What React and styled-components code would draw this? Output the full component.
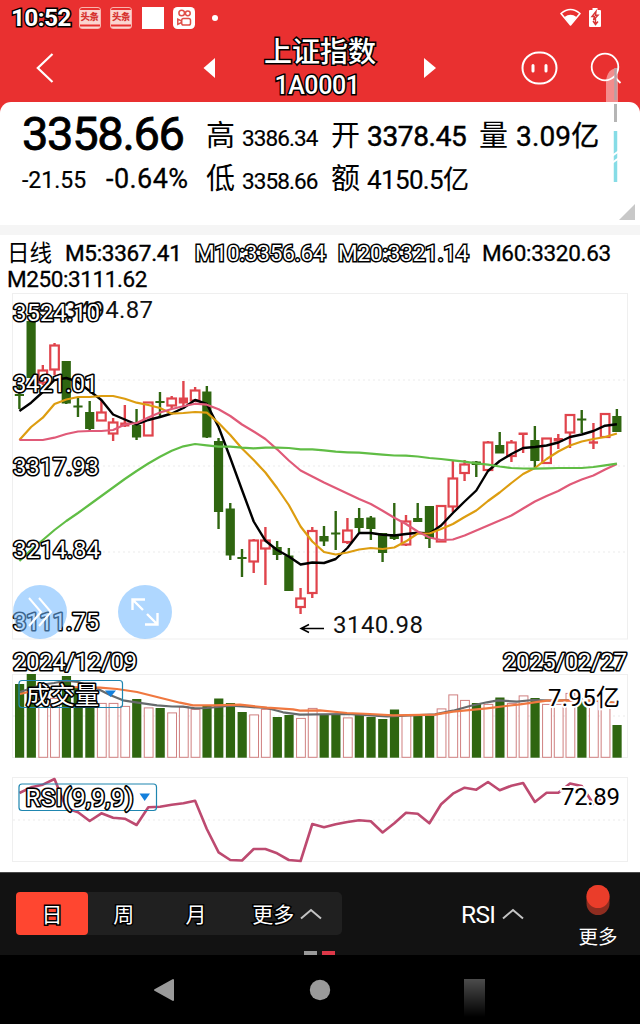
import React from "react";
import styled, { createGlobalStyle, css } from "styled-components";

const Global = createGlobalStyle`
  html, body { margin: 0; padding: 0; background: #fff; }
  * { box-sizing: border-box; }
  body { font-family: Roboto, "Noto Sans CJK SC", sans-serif; color: #000; }
  svg { display: block; }
`;

const outline = css`
  color: #fff;
  -webkit-text-stroke: ${(p) => p.$stroke || 3}px #000;
  paint-order: stroke fill;
`;

const Screen = styled.main`
  position: relative;
  width: 640px;
  height: 1024px;
  display: flex;
  flex-direction: column;
  overflow: hidden;
  background: #fff;
`;

/* ---------- header ---------- */
const Header = styled.header`
  height: 115px;
  flex: none;
  background: #e93030;
`;
const StatusBar = styled.div`
  height: 34px;
  padding: 1px 39px 0 11px;
  display: flex;
  align-items: center;
  justify-content: space-between;
`;
const StatusGroup = styled.div`
  display: flex;
  align-items: center;
  gap: ${(p) => p.$gap}px;
`;
const Clock = styled.span`
  ${outline}
  width: 58px;
  font-size: 24.5px;
  line-height: 34px;
  font-weight: 700;
  letter-spacing: -0.7px;
  white-space: nowrap;
`;
const NewsBadge = styled.span`
  width: 22px;
  height: 22px;
  border: 1px solid #f9b5ae;
  border-radius: 3px;
  background: linear-gradient(#e93030 0 2px, #fbd5d0 2px 16px, #e93030 17px 18px, #fbd5d0 19px);
  color: #d6332f;
  font-size: 9.5px;
  line-height: 18px;
  font-weight: 900;
  text-align: center;
  letter-spacing: -0.5px;
  white-space: nowrap;
`;
const WhiteSquare = styled.span`
  width: 22px;
  height: 22px;
  background: #fff;
`;
const Dot = styled.span`
  width: 6px;
  height: 6px;
  margin-left: 7px;
  border-radius: 50%;
  background: #fff;
`;
const NavBar = styled.div`
  height: 66px;
  padding: 0 18px 0 36px;
  display: grid;
  grid-template-columns: 167px 60px 114px 59px 1fr;
  align-items: center;
`;
const TitleBlock = styled.div`
  display: flex;
  flex-direction: column;
  align-items: center;
`;
const Title = styled.h1`
  ${outline}
  margin: 1px 0 0;
  font-size: 28px;
  line-height: 36px;
  font-weight: 500;
  white-space: nowrap;
`;
const Code = styled.span`
  ${outline}
  margin-left: -6px;
  font-size: 25px;
  line-height: 30px;
  font-weight: 500;
  letter-spacing: -0.4px;
`;
const NavIcons = styled.div`
  display: flex;
  justify-content: flex-end;
  align-items: center;
  gap: 31px;
`;
const Center = styled.div`
  display: flex;
  justify-content: ${(p) => p.$at || "center"};
`;

/* ---------- quote card ---------- */
const QuoteCard = styled.section`
  position: relative;
  height: 123px;
  margin-top: -13px;
  flex: none;
  padding: 7px 0 0 22px;
  display: flex;
  border-radius: 11px 11px 0 0;
  background: #fff;
`;
const PriceBlock = styled.div`
  width: 184px;
`;
const Details = styled.div`
  flex: 1;
  padding-top: 3px;
`;
const QuoteRow = styled.div`
  display: grid;
  grid-template-columns: ${(p) => p.$cols};
  align-items: baseline;
  height: ${(p) => p.$h}px;
  line-height: ${(p) => p.$h}px;
  white-space: nowrap;
`;
const Num = styled.span`
  font-size: ${(p) => p.$size}px;
  -webkit-text-stroke: ${(p) => p.$bold || 0}px #000;
  letter-spacing: ${(p) => p.$ls || 0}em;
`;
const Field = styled.span`
  font-family: "Noto Sans CJK SC", sans-serif;
  font-size: 29px;
`;
const Corner = styled.span`
  position: absolute;
  right: 5px;
  bottom: 5px;
  border-style: solid;
  border-width: 0 0 16px 16px;
  border-color: transparent transparent #c8c8c8 transparent;
`;
const Divider = styled.div`
  height: 10px;
  flex: none;
  background: #f5f5f5;
`;

/* ---------- averages ---------- */
const Averages = styled.section`
  height: 58px;
  flex: none;
  padding: 5px 0 0 7px;
`;
const AvgRow = styled.div`
  display: grid;
  grid-template-columns: 58px 130px 143px 144px 1fr;
  height: 26px;
  line-height: 26px;
  white-space: nowrap;
`;
const Avg = styled.span`
  font-size: 22.5px;
  letter-spacing: ${(p) => p.$ls || 0}px;
  -webkit-text-stroke: ${(p) => p.$bold || 0}px #000;
  ${(p) => p.$outlined && outline}
`;

/* ---------- charts ---------- */
const ChartArea = styled.section`
  position: relative;
  height: 579px;
  flex: none;
`;
const RoundButton = styled.button`
  position: absolute;
  left: ${(p) => p.$x}px;
  top: 292px;
  width: 54px;
  height: 54px;
  padding: 0;
  border: 0;
  border-radius: 50%;
  display: grid;
  place-items: center;
  background: rgba(110, 182, 255, 0.55);
`;

/* ---------- bottom ---------- */
const Toolbar = styled.footer`
  position: relative;
  height: 83px;
  flex: none;
  padding: 19px 16px 0;
  display: flex;
  background: #121212;
  border-top: 1px solid #4a4a4a;
  color: #fff;
`;
const Segments = styled.div`
  display: flex;
  width: 326px;
  height: 43px;
  border-radius: 5px;
  background: #202020;
`;
const Segment = styled.button`
  width: ${(p) => p.$w}px;
  padding: 0;
  border: 0;
  border-radius: 4px;
  display: flex;
  align-items: center;
  justify-content: center;
  gap: 6px;
  background: ${(p) => (p.$active ? "#ff4630" : "transparent")};
  color: #fff;
  font: 400 21px/43px "Noto Sans CJK SC", sans-serif;
`;
const Outlined = styled.span`
  ${outline}
`;
const Picker = styled.div`
  margin-left: 119px;
  height: 44px;
  display: flex;
  align-items: center;
  gap: 7px;
  font-size: 24.5px;
  letter-spacing: -0.7px;
`;
const MoreItem = styled.div`
  width: 44px;
  margin: -8px 4px 0 auto;
  display: flex;
  flex-direction: column;
  align-items: center;
  gap: 5px;
  font: 400 19.5px/28px "Noto Sans CJK SC", sans-serif;
  white-space: nowrap;
`;
const Pager = styled.div`
  position: absolute;
  left: 304px;
  bottom: 0;
  display: flex;
  gap: 5px;
`;
const Page = styled.span`
  width: 13px;
  height: 4px;
  background: ${(p) => p.$c};
`;
const SystemNav = styled.nav`
  height: 69px;
  flex: none;
  padding: 22px 155px 0 152px;
  display: flex;
  justify-content: space-between;
  background: #000;
`;
const Recents = styled.span`
  width: 21px;
  height: 38px;
  margin-top: 2px;
  background: linear-gradient(#4c4c4c, #000);
`;
const Trace = styled.svg`
  position: absolute;
  left: 600px;
  top: 60px;
`;

/* ---------- data ---------- */
// kind, body top, body bottom, wick top, wick bottom
const candles = [
  ["g", 394, 396, 386, 409], ["g", 321, 378, 310, 378], ["r", 370, 383, 365, 385], ["r", 345, 370, 343, 375],
  ["g", 361, 403.5, 361, 404], ["g", 405.5, 407.5, 398, 417], ["g", 412, 429, 401, 431], ["r", 412, 421, 400, 421],
  ["r", 422, 434, 418, 441], ["r", 422.5, 426.5, 405, 427], ["g", 425, 437.5, 409, 440], ["r", 402, 436, 402, 436],
  ["g", 401, 403, 392, 416], ["r", 398, 406, 396, 409], ["r", 397.5, 403.5, 381, 406], ["r", 390, 401, 387, 402],
  ["g", 391.5, 437.5, 386, 438], ["g", 441, 512, 438, 529], ["g", 508.5, 555.5, 503, 560], ["g", 557, 559, 549, 577],
  ["r", 540, 562, 539, 573], ["r", 540, 549, 527, 585], ["g", 547, 555, 541, 560], ["g", 555.5, 591, 548, 591],
  ["r", 598, 607.5, 588, 614], ["r", 530.5, 593.5, 527, 598], ["g", 536, 541.5, 526, 546], ["g", 532.5, 534.5, 511, 550],
  ["r", 530, 542.5, 518, 544], ["g", 518, 528, 508, 532], ["g", 517.5, 529, 516, 540], ["g", 533, 553, 533, 562],
  ["g", 534, 539, 503, 540], ["r", 521, 545, 515, 546], ["g", 518, 522, 503, 522], ["g", 506, 539, 506, 548],
  ["r", 505.5, 542, 505, 542], ["r", 478, 507, 461, 512], ["r", 464, 473.5, 460, 481], ["g", 461.5, 465, 461, 477],
  ["r", 442, 470.5, 441, 471], ["g", 445, 453.5, 432, 453], ["r", 442, 456.5, 440, 462], ["r", 432.5, 435, 433, 453],
  ["g", 440, 461, 426, 467], ["r", 438, 463.5, 438, 464], ["r", 438, 441.5, 434, 449], ["r", 414.5, 433, 414, 448],
  ["g", 418.5, 420.5, 410, 433], ["r", 441.3, 443.7, 423, 449], ["r", 413.5, 437.5, 413, 438], ["g", 416, 432, 409, 432],
];
const ma5 = [411, 402.7, 392, 380, 378, 382, 391, 400, 414.5, 419.5, 424.5, 420, 417, 413.5, 408, 400, 404, 427, 458, 490, 521.5, 540.7, 550, 556.5, 564.5, 562.5, 563, 559, 548, 533, 533, 534.7, 535.5, 534, 532.7, 533.5, 525.5, 513, 501.5, 490.5, 471, 461, 454, 448, 447, 445.5, 442.5, 437, 434.5, 431, 425.7, 424.3];
const ma10 = [440, 427, 417.7, 404, 399.5, 397, 397, 396, 396, 398.7, 402.7, 405, 408, 413.7, 413, 412, 412.7, 423, 435, 448.5, 460, 472.5, 488, 505, 526.5, 541.5, 552, 554.5, 552.5, 549.5, 548, 549, 547.5, 541.3, 533.5, 533.5, 529, 524, 517, 510.5, 501, 492.5, 483, 474, 468, 459, 451.5, 445.5, 441.5, 439, 437, 433.5];
const ma20 = [440, 440, 440, 437.7, 434, 431.5, 431, 431, 430, 424.5, 423, 417.5, 412.5, 409, 406.3, 403.7, 404.7, 409.3, 416, 424.5, 431.5, 439, 449.3, 460.5, 470.5, 476.5, 482.5, 488, 493.5, 499, 504, 510.7, 517.7, 524, 531.5, 537.5, 540, 539.5, 535.5, 530.5, 525.5, 520.5, 515.5, 508.5, 501.5, 496, 491, 484.5, 479.5, 475.5, 469.5, 464];
const ma60 = [561, 550, 540, 530, 521, 513, 504.5, 496, 487.5, 479, 471, 463.5, 456.7, 450.7, 446.3, 444, 445.3, 446.7, 446.7, 447.7, 448.3, 447.7, 447.7, 448, 449.3, 449.3, 450.3, 451.7, 452.3, 452.7, 453.7, 454.7, 455.5, 455.7, 456.5, 458, 459, 460.3, 461.7, 463.3, 464.7, 466.5, 468, 468.5, 468.7, 468.3, 468, 468, 468, 467, 465.3, 463.7];
const volume = [684, 674, 693, 698, 676, 687, 690, 703, 703, 706, 699, 707.5, 708, 712.5, 706.5, 709, 706, 698.5, 703, 712, 714.5, 709, 717, 715, 718, 708, 715, 714, 717.5, 715, 717, 719, 709.5, 715, 716, 716, 708.5, 694.5, 700, 703, 704, 697.5, 703, 695.5, 698, 704, 704, 693, 698, 700, 705, 725];
const rsi = [793, 787.3, 784.7, 779, 808.3, 812.3, 821, 813.3, 817.7, 818.7, 825, 807.3, 806.7, 804.7, 803.3, 800.7, 829, 852.3, 860, 860.5, 849, 849, 853.3, 860, 861, 824, 827.3, 824.3, 822, 820.3, 821.3, 832.5, 823.3, 812.7, 813.7, 823.3, 804.3, 793.7, 787.7, 789.7, 782, 790.3, 785.7, 783, 802, 792.7, 792.7, 783.5, 786, 804, 796, 803];
const volGrey = "20,692 32,688 43,684.5 54,683 66.5,680.7 78,682 96,688 110,695 123,700.3 136,702.3 157,705.3 172,706.5 183,706.7 195,708.3 207,708 230,705.7 247,706.7 267,708 283,712.3 300,714.7 347,714 387,716.5 435,714.3 453,710.7 470,706 487,702.3 498,700.3 517,701.7 533,700 553,700.7 573,700 597,701 617,703";
const volOrange = "20,694 37,690 66,687 100,687.7 117,689 137,692 160,697.7 180,702.7 193,705.3 213,705.3 240,704.7 267,707.7 293,709.3 300,710.7 320,710.3 347,713 370,714 393,715.3 435,714.7 453,711.7 487,708.3 520,704.3 547,700.7 573,700.3 597,700.7 617,703";

const xAt = (i) => 19.4 + i * 11.715;
const points = (ys) => ys.map((y, i) => `${xAt(i).toFixed(1)},${y}`).join(" ");

const Line = styled.polyline`
  fill: none;
  stroke: ${(p) => p.$c};
  stroke-width: ${(p) => p.$w || 2.2};
  stroke-linejoin: round;
`;
const Frame = styled.rect`
  fill: none;
  stroke: #efefef;
`;
const Grid = styled.line`
  stroke: #ebebeb;
  stroke-dasharray: 2 3;
`;
const AxisText = styled.text`
  font: 400 24px Roboto, "Noto Sans CJK SC", sans-serif;
  fill: #fff;
  stroke: #000;
  stroke-width: 3.2;
  stroke-linejoin: round;
  paint-order: stroke;
`;
const PlainText = styled.text`
  font: 400 24px Roboto, sans-serif;
  fill: #111;
`;
const HaloText = styled.text`
  font: 400 24px Roboto, "Noto Sans CJK SC", sans-serif;
  fill: #000;
  stroke: #fff;
  stroke-width: 4;
  paint-order: stroke;
`;

const RED = "#e0444c";
const GREEN = "#2f6610";

function Candle({ data: [kind, top, bottom, high, low], x }) {
  const color = kind === "g" ? GREEN : RED;
  const hollow = kind === "r" && bottom - top > 6;
  return (
    <g stroke={color} strokeWidth="2.4" fill="none">
      <line x1={x} x2={x} y1={high} y2={hollow ? top : low} />
      {hollow && <line x1={x} x2={x} y1={bottom} y2={low} />}
      {hollow ? (
        <rect x={x - 4.3} y={top + 0.5} width="8.6" height={bottom - top - 1} strokeWidth="2.2" />
      ) : (
        <rect x={x - 4.6} y={top} width="9.2" height={bottom - top} fill={color} stroke="none" />
      )}
    </g>
  );
}

function Charts() {
  return (
    <svg width="640" height="579" viewBox="0 293 640 579">
      <Frame x="12.5" y="293.5" width="615" height="345.5" />
      {[380, 466, 552].map((y) => (
        <Grid key={y} x1="13" x2="627" y1={y} y2={y} />
      ))}
      {candles.map((c, i) => (
        <Candle key={i} data={c} x={xAt(i)} />
      ))}
      <Line $c="#000" $w={2.4} points={points(ma5)} />
      <Line $c="#dd9d10" points={points(ma10)} />
      <Line $c="#e05a78" points={points(ma20)} />
      <Line $c="#60bd45" points={points(ma60)} />
      <PlainText x="64" y="318" textLength="89">3494.87</PlainText>
      <path d="M36 311H60M43 306L36 311L43 316" stroke="#111" strokeWidth="1.5" fill="none" />
      <PlainText x="333" y="632.5" textLength="90">3140.98</PlainText>
      <path d="M324 628.5H301M309 624.5L301 628.5L309 632.5" stroke="#000" strokeWidth="1.5" fill="none" />
      <AxisText x="13" y="320.5" textLength="87">3524.10</AxisText>
      <AxisText x="13" y="391.5" textLength="85">3421.01</AxisText>
      <AxisText x="13" y="474.5" textLength="86">3317.93</AxisText>
      <AxisText x="13" y="557.5" textLength="87">3214.84</AxisText>
      <AxisText x="13" y="629.5" textLength="86">3111.75</AxisText>
      <AxisText x="13" y="669.5" textLength="124">2024/12/09</AxisText>
      <AxisText x="503" y="669.5" textLength="124">2025/02/27</AxisText>

      <Frame x="12.5" y="674.5" width="615" height="83" />
      <Grid x1="13" x2="627" y1="716" y2="716" />
      {volume.map((y, i) =>
        candles[i][0] === "g" ? (
          <rect key={i} x={xAt(i) - 4.4} y={y} width="9.2" height={757.7 - y} fill={GREEN} />
        ) : (
          <rect key={i} x={xAt(i) - 4} y={y + 0.4} width="8.8" height={756.9 - y} fill="#fff" stroke="#d08080" strokeWidth="1" />
        )
      )}
      <Line $c="#666a6c" points={volGrey} />
      <Line $c="#f07840" points={volOrange} />
      <rect x="19" y="680.5" width="103.5" height="27" rx="3" fill="none" stroke="#1f86b0" strokeWidth="1.2" />
      <AxisText x="26" y="704" textLength="73">成交量</AxisText>
      <path d="M105 690.5H116L110.5 697Z" fill="#1480dc" />
      <HaloText x="548" y="706" textLength="72">7.95亿</HaloText>

      <Frame x="12.5" y="777.5" width="615" height="84" />
      <Grid x1="13" x2="627" y1="820" y2="820" />
      <Line $c="#bd4a70" $w={2.6} points={points(rsi)} />
      <rect x="19" y="784" width="137.5" height="26.5" rx="3" fill="none" stroke="#1f86b0" strokeWidth="1.2" />
      <AxisText x="25.5" y="806" textLength="108">RSI(9,9,9)</AxisText>
      <path d="M139.500 793.500H150L144.700 801Z" fill="#1480dc" />
      <HaloText x="561" y="805" textLength="59">72.89</HaloText>
    </svg>
  );
}

const Chevron = () => (
  <svg width="22" height="12" viewBox="0 0 22 12" fill="none" stroke="#c4c4c4" strokeWidth="2">
    <path d="M1 10.500L11 2L21 10.500" />
  </svg>
);

export default function App() {
  return (
    <Screen>
      <Global />
      <Header>
        <StatusBar>
          <StatusGroup $gap={9.5}>
            <Clock>10:52</Clock>
            <NewsBadge>头条</NewsBadge>
            <NewsBadge>头条</NewsBadge>
            <WhiteSquare />
            <svg width="22" height="22" viewBox="0 0 22 22">
              <rect width="22" height="22" rx="4.500" fill="#fff" />
              <g fill="none" stroke="#e05048" strokeWidth="1.500">
                <circle cx="8.700" cy="6" r="2.800" />
                <circle cx="14.800" cy="6.300" r="2.400" />
                <rect x="8.700" y="11.500" width="8.800" height="6.500" rx="1.800" />
                <path d="M8.500 14L4.800 12.200V17.300L8.500 15.500" />
              </g>
            </svg>
            <Dot />
          </StatusGroup>
          <StatusGroup $gap={8}>
            <svg width="21" height="19" viewBox="0 0 21 19">
              <path d="M1 5.500Q10.500-2.500 20 5.500L10.500 17Z" fill="none" stroke="#fff" strokeWidth="1.600" strokeLinejoin="round" />
              <path d="M4.500 9Q10.500 4.500 16.500 9L10.500 17Z" fill="#fff" />
            </svg>
            <svg width="12" height="19" viewBox="0 0 12 19">
              <path d="M3.500 0H8.500V2H11Q12 2 12 3V18Q12 19 11 19H1Q0 19 0 18V3Q0 2 1 2H3.500Z" fill="#fff" />
              <path d="M7 3.500L3 8.500H5.500L4.500 12L9 7.300H6.500ZM6.500 10.500V16.500M4 13L6.500 16.500L9 13.500" fill="none" stroke="#d83434" strokeWidth="1.400" />
            </svg>
          </StatusGroup>
        </StatusBar>
        <NavBar>
          <svg width="18" height="30" viewBox="0 0 18 30" fill="none" stroke="#fff" strokeWidth="2.200">
            <path d="M16.500 1L1.800 15L16.500 29" />
          </svg>
          <Center $at="flex-start">
            <svg width="12" height="20" viewBox="0 0 12 20"><path d="M12 0V20L0.500 10Z" fill="#fff" /></svg>
          </Center>
          <TitleBlock>
            <Title>上证指数</Title>
            <Code>1A0001</Code>
          </TitleBlock>
          <Center $at="flex-end">
            <svg width="12" height="20" viewBox="0 0 12 20"><path d="M0 0V20L12 10Z" fill="#fff" /></svg>
          </Center>
          <NavIcons>
            <svg width="38" height="34" viewBox="0 0 38 34" fill="none" stroke="#fff">
              <rect x="1.500" y="1.500" width="34" height="31" rx="16" strokeWidth="2" />
              <path d="M12 14.500V20M25 14.500V20" strokeWidth="3" strokeLinecap="round" />
            </svg>
            <svg width="32" height="32" viewBox="0 0 32 32" fill="none" stroke="#fff" strokeWidth="1.800">
              <circle cx="15" cy="15" r="13.300" />
              <path d="M24 24.500L30.500 31" />
            </svg>
          </NavIcons>
        </NavBar>
      </Header>

      <QuoteCard>
        <PriceBlock>
          <QuoteRow $h={50} $cols="1fr">
            <Num $size={47} $bold={0.8} $ls={-0.028}>3358.66</Num>
          </QuoteRow>
          <QuoteRow $h={40} $cols="84px 1fr">
            <Num $size={23} $bold={0.2}>-21.55</Num>
            <Num $size={27} $bold={0.3} $ls={0.016}>-0.64%</Num>
          </QuoteRow>
        </PriceBlock>
        <Details>
          <QuoteRow $h={43} $cols="36px 89px 36px 112px 37px 1fr">
            <Field>高</Field>
            <Num $size={22.5} $bold={0.2} $ls={-0.04}>3386.34</Num>
            <Field>开</Field>
            <Num $size={28} $bold={0.5} $ls={-0.012}>3378.45</Num>
            <Field>量</Field>
            <Num $size={28} $bold={0.4} $ls={0.005}>3.09亿</Num>
          </QuoteRow>
          <QuoteRow $h={43} $cols="36px 89px 36px 1fr">
            <Field>低</Field>
            <Num $size={22.5} $bold={0.2} $ls={-0.04}>3358.66</Num>
            <Field>额</Field>
            <Num $size={26} $bold={0.2} $ls={-0.025}>4150.5亿</Num>
          </QuoteRow>
        </Details>
        <Corner />
      </QuoteCard>
      <Divider />

      <Averages>
        <AvgRow>
          <Avg>日线</Avg>
          <Avg $bold={0.4} $ls={-0.3}>M5:3367.41</Avg>
          <Avg $outlined $ls={-0.15}>M10:3356.64</Avg>
          <Avg $outlined $ls={-0.15}>M20:3321.14</Avg>
          <Avg $bold={0.3} $ls={-0.3}>M60:3320.63</Avg>
        </AvgRow>
        <AvgRow>
          <Avg $bold={0.3} $ls={-0.4}>M250:3111.62</Avg>
        </AvgRow>
      </Averages>

      <ChartArea>
        <Charts />
        <RoundButton $x={13}>
          <svg width="28" height="32" viewBox="0 0 28 32" fill="none" stroke="#fff" strokeWidth="2">
            <path d="M3 2L15 16L3 30M13 2L25 16L13 30" />
          </svg>
        </RoundButton>
        <RoundButton $x={117.5}>
          <svg width="28" height="28" viewBox="0 0 28 28" fill="none" stroke="#fff" strokeWidth="2.400">
            <path d="M14 1.500H1.500V12M2 2L12 12M16 16L26 26M14 26.500H26.500V15" />
          </svg>
        </RoundButton>
      </ChartArea>

      <Toolbar>
        <Segments>
          <Segment $w={72} $active><Outlined>日</Outlined></Segment>
          <Segment $w={72}><Outlined>周</Outlined></Segment>
          <Segment $w={73}><Outlined>月</Outlined></Segment>
          <Segment $w={110}><Outlined>更多</Outlined><Chevron /></Segment>
        </Segments>
        <Picker>RSI <Chevron /></Picker>
        <MoreItem>
          <svg width="24" height="33" viewBox="0 0 24 33">
            <rect x="0.500" y="1" width="23" height="30" rx="11.500" fill="#8f2d20" />
            <circle cx="12" cy="12.500" r="11.500" fill="#ea3d2a" />
          </svg>
          更多
        </MoreItem>
        <Pager>
          <Page $c="#999" />
          <Page $c="#dc3848" />
        </Pager>
      </Toolbar>
      <SystemNav>
        <svg width="23" height="26" viewBox="0 0 23 26">
          <path d="M21 3V23L3 13Z" fill="#9a9a9a" stroke="#9a9a9a" strokeWidth="2" strokeLinejoin="round" />
        </svg>
        <svg width="22" height="26" viewBox="0 0 22 26"><circle cx="11" cy="13" r="10.200" fill="#9a9a9a" /></svg>
        <Recents />
      </SystemNav>

      <Trace width="24" height="126" viewBox="0 0 24 126">
        <path d="M6 42V22Q7 8 18 8V42Z" fill="#fff" opacity="0.45" />
        <path d="M15.500 8V40" stroke="#b9a0a4" strokeWidth="2.500" />
        <path d="M15.500 44V62" stroke="#b5b5b5" strokeWidth="3" />
        <path d="M15.500 71V122" stroke="#86dce6" strokeWidth="3.500" />
        <path d="M12 96L19 91M12 103L19 98" stroke="#fff" strokeWidth="2" />
      </Trace>
    </Screen>
  );
}
